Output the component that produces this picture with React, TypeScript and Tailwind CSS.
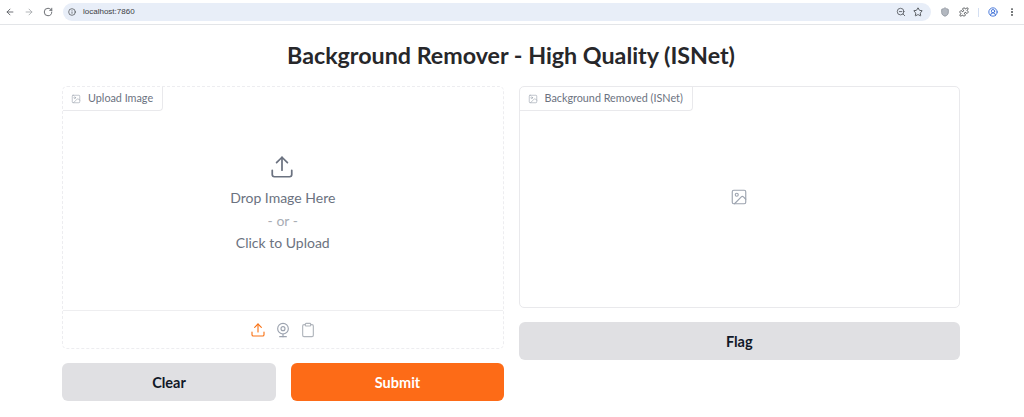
import { ArrowLeft, ArrowRight, RotateCw, Info, ZoomOut, Star, Puzzle, CircleUserRound, EllipsisVertical, Shield, Upload, Image as ImageIcon, Webcam, Clipboard } from "lucide-react";

function Label({ text }: { text: string }) {
  return (
    <div className="flex items-center self-start h-[24px] border-r border-b border-[#e9e9ec] rounded-br-[4px] pl-[8px] pr-[9px] gap-[7px] text-[10.8px] text-[#6b7280] -mb-px">
      <ImageIcon size={10} strokeWidth={1.5} className="text-[#9ca3af]" />
      <span>{text}</span>
    </div>
  );
}

export default function App() {
  return (
    <div className="w-[1024px] h-[417px] bg-white overflow-hidden font-['Lato',sans-serif]">
      <div className="flex items-center h-[25px] border-b border-[#e3e5e8] pl-[5px] pr-[7px]">
        <ArrowLeft size={10} strokeWidth={2} className="text-[#52565b]" />
        <ArrowRight size={10} strokeWidth={2} className="text-[#a4a7ab] ml-[9px]" />
        <RotateCw size={10} strokeWidth={2} className="text-[#52565b] ml-[9px]" />
        <div className="flex items-center w-[868px] h-[18px] rounded-full bg-[#e8eef8] ml-[10px] pl-[5px]">
          <Info size={8} strokeWidth={2} className="text-[#3c4043]" />
          <span className="ml-[7px] text-[8px] text-[#3c4043] font-['Liberation_Sans',sans-serif]">localhost:7860</span>
          <ZoomOut size={10} strokeWidth={2} className="text-[#52565b] ml-[761px]" />
          <Star size={10} strokeWidth={2} fill="none" className="text-[#3c4043] ml-[7px]" />
        </div>
        <Shield size={10} strokeWidth={2} fill="#b3b8c0" className="text-[#8e949c] ml-[9px]" />
        <Puzzle size={10} strokeWidth={2} className="text-[#3c4043] ml-[9px]" />
        <div className="w-px h-[9px] bg-[#d4dff2] ml-[9px]" />
        <CircleUserRound size={10} strokeWidth={2.2} className="text-[#3b6fd8] ml-[9px]" />
        <EllipsisVertical size={10} strokeWidth={2.5} className="text-[#3c4043] ml-[9px]" />
      </div>

      <h1 className="h-[61px] flex items-center justify-center text-[23.25px] font-bold text-[#27272a] pb-[1px] pr-[2px]">
        Background Remover - High Quality (ISNet)
      </h1>

      <div className="grid grid-cols-2 gap-[15px] w-[898px] ml-[62px]">
        <div className="flex flex-col gap-[14px]">
          <div className="flex flex-col h-[263px] border border-dashed border-[#ededf0] rounded-[5px]">
            <Label text="Upload Image" />
            <div className="flex-1 flex flex-col items-center text-[#6b7280] text-[14px] leading-[22.5px] pt-[44px]">
              <Upload size={26} strokeWidth={1.6} className="text-[#6b7280] mb-[7px] -ml-[2px]" />
              <span>Drop Image Here</span>
              <span className="text-[#a8adb5]">- or -</span>
              <span>Click to Upload</span>
            </div>
            <div className="flex items-center justify-center h-[38px] border-t border-[#eeeef0] gap-[9px]">
              <Upload size={16} strokeWidth={1.7} className="text-[#f97316]" />
              <Webcam size={16} strokeWidth={1.7} className="text-[#9ca3af]" />
              <Clipboard size={16} strokeWidth={1.7} className="text-[#b0b5bc]" />
            </div>
          </div>
          <div className="grid grid-cols-[214px_213px] gap-[15px]">
            <button className="h-[38px] pt-[1px] rounded-[6px] bg-[#e0e0e3] text-[14.5px] font-bold text-[#111827]">Clear</button>
            <button className="h-[38px] pt-[1px] rounded-[6px] bg-[#fd6b17] text-[14.5px] font-bold text-white">Submit</button>
          </div>
        </div>
        <div className="flex flex-col gap-[14px]">
          <div className="flex flex-col h-[222px] border border-[#e9e9ec] rounded-[5px]">
            <Label text="Background Removed (ISNet)" />
            <div className="flex-1 flex items-center justify-center pb-[24px]">
              <ImageIcon size={18} strokeWidth={1.5} className="text-[#9ca3af]" />
            </div>
          </div>
          <button className="h-[38px] pt-[1px] rounded-[6px] bg-[#e0e0e3] text-[14.5px] font-bold text-[#111827]">Flag</button>
        </div>
      </div>
    </div>
  );
}
